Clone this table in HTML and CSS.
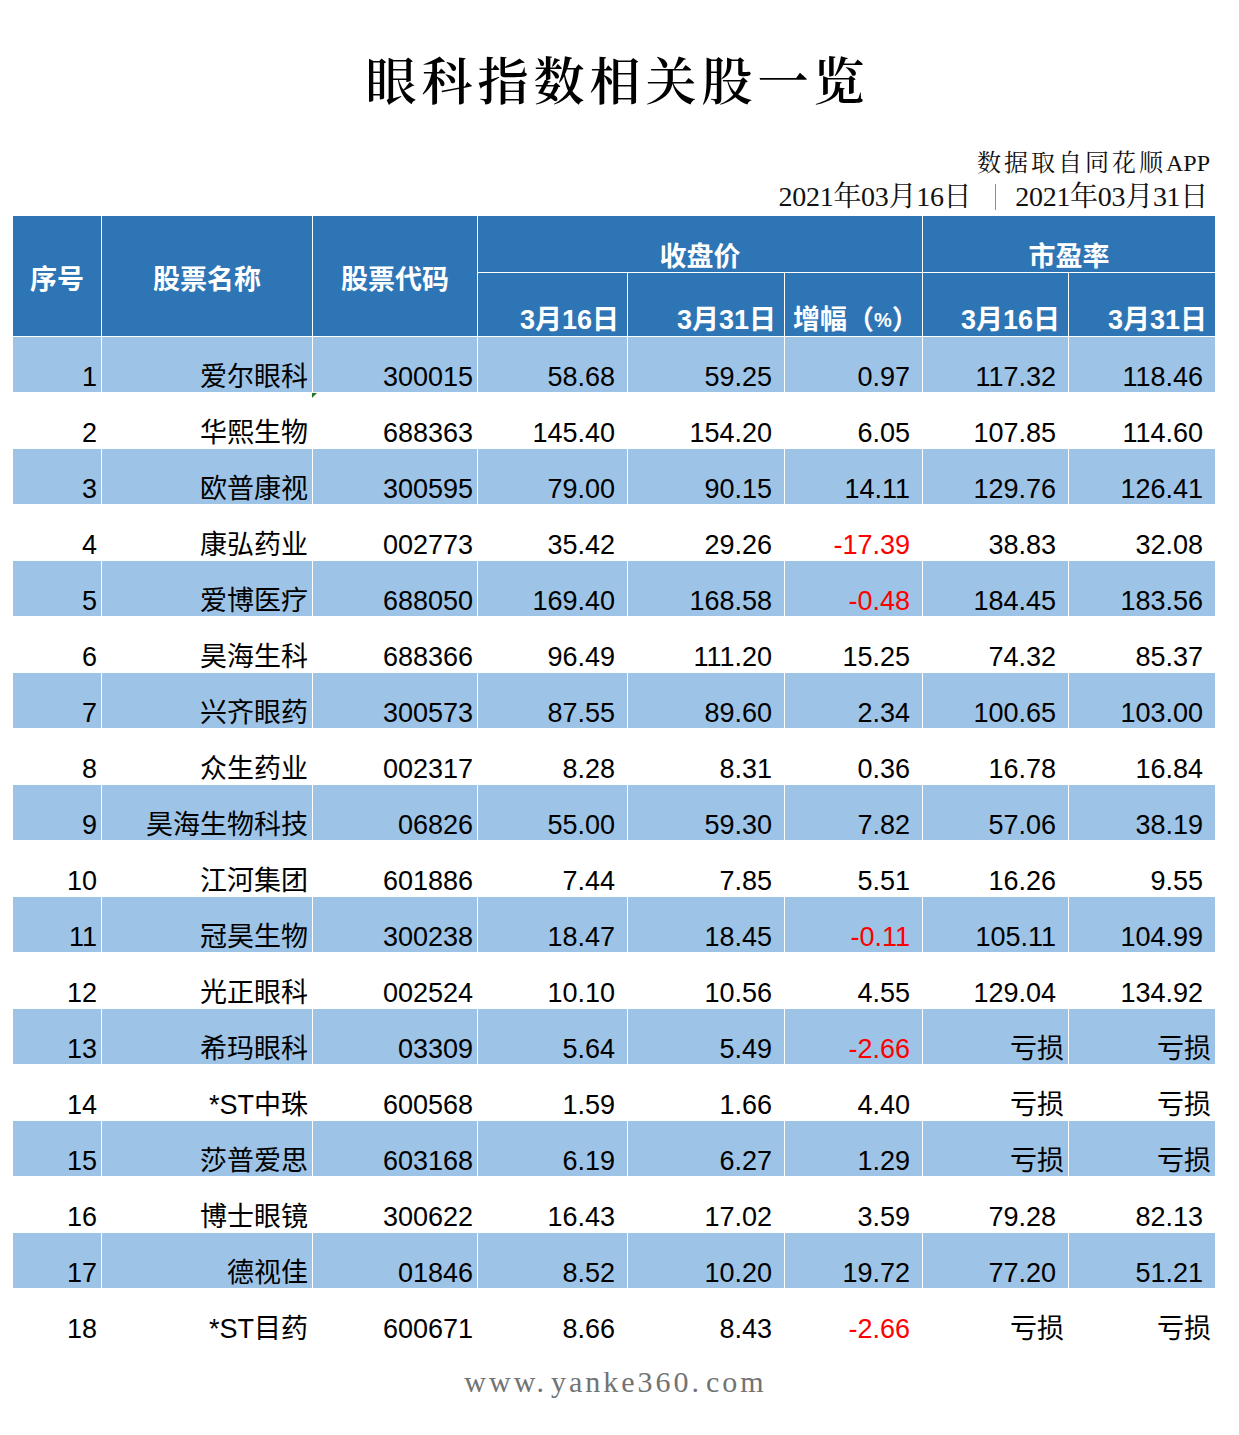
FILE: index.html
```html
<!DOCTYPE html>
<html lang="zh-CN">
<head>
<meta charset="utf-8">
<title>眼科指数相关股一览</title>
<link rel="stylesheet" href="styles.css">
</head>
<body>
<div class="page">
  <h1 class="title">眼科指数相关股一览</h1>
  <div class="meta">
    <div class="source"><span class="cjk">数据取自同花顺</span>APP</div>
    <div class="dates">2021年03月16日<span class="sep"></span>2021年03月31日</div>
  </div>

  <div class="head">
    <div class="h h-idx">序号</div>
    <div class="h h-name">股票名称</div>
    <div class="h h-code">股票代码</div>
    <div class="h h-close">收盘价</div>
    <div class="h h-pe">市盈率</div>
    <div class="h sub">3月16日</div>
    <div class="h sub">3月31日</div>
    <div class="h sub sub-left">增幅<span class="paren">（</span><span class="pct">%</span><span class="paren">）</span></div>
    <div class="h sub">3月16日</div>
    <div class="h sub">3月31日</div>
  </div>

  <div class="rows">
    <div class="row odd"><div class="c">1</div><div class="c">爱尔眼科</div><div class="c">300015</div><div class="c n">58.68</div><div class="c n">59.25</div><div class="c n">0.97</div><div class="c n">117.32</div><div class="c n">118.46</div></div>
    <div class="row"><div class="c">2</div><div class="c">华熙生物</div><div class="c flag">688363</div><div class="c n">145.40</div><div class="c n">154.20</div><div class="c n">6.05</div><div class="c n">107.85</div><div class="c n">114.60</div></div>
    <div class="row odd"><div class="c">3</div><div class="c">欧普康视</div><div class="c">300595</div><div class="c n">79.00</div><div class="c n">90.15</div><div class="c n">14.11</div><div class="c n">129.76</div><div class="c n">126.41</div></div>
    <div class="row"><div class="c">4</div><div class="c">康弘药业</div><div class="c">002773</div><div class="c n">35.42</div><div class="c n">29.26</div><div class="c n neg">-17.39</div><div class="c n">38.83</div><div class="c n">32.08</div></div>
    <div class="row odd"><div class="c">5</div><div class="c">爱博医疗</div><div class="c">688050</div><div class="c n">169.40</div><div class="c n">168.58</div><div class="c n neg">-0.48</div><div class="c n">184.45</div><div class="c n">183.56</div></div>
    <div class="row"><div class="c">6</div><div class="c">昊海生科</div><div class="c">688366</div><div class="c n">96.49</div><div class="c n">111.20</div><div class="c n">15.25</div><div class="c n">74.32</div><div class="c n">85.37</div></div>
    <div class="row odd"><div class="c">7</div><div class="c">兴齐眼药</div><div class="c">300573</div><div class="c n">87.55</div><div class="c n">89.60</div><div class="c n">2.34</div><div class="c n">100.65</div><div class="c n">103.00</div></div>
    <div class="row"><div class="c">8</div><div class="c">众生药业</div><div class="c">002317</div><div class="c n">8.28</div><div class="c n">8.31</div><div class="c n">0.36</div><div class="c n">16.78</div><div class="c n">16.84</div></div>
    <div class="row odd"><div class="c">9</div><div class="c">昊海生物科技</div><div class="c">06826</div><div class="c n">55.00</div><div class="c n">59.30</div><div class="c n">7.82</div><div class="c n">57.06</div><div class="c n">38.19</div></div>
    <div class="row"><div class="c">10</div><div class="c">江河集团</div><div class="c">601886</div><div class="c n">7.44</div><div class="c n">7.85</div><div class="c n">5.51</div><div class="c n">16.26</div><div class="c n">9.55</div></div>
    <div class="row odd"><div class="c">11</div><div class="c">冠昊生物</div><div class="c">300238</div><div class="c n">18.47</div><div class="c n">18.45</div><div class="c n neg">-0.11</div><div class="c n">105.11</div><div class="c n">104.99</div></div>
    <div class="row"><div class="c">12</div><div class="c">光正眼科</div><div class="c">002524</div><div class="c n">10.10</div><div class="c n">10.56</div><div class="c n">4.55</div><div class="c n">129.04</div><div class="c n">134.92</div></div>
    <div class="row odd"><div class="c">13</div><div class="c">希玛眼科</div><div class="c">03309</div><div class="c n">5.64</div><div class="c n">5.49</div><div class="c n neg">-2.66</div><div class="c">亏损</div><div class="c">亏损</div></div>
    <div class="row"><div class="c">14</div><div class="c">*ST中珠</div><div class="c">600568</div><div class="c n">1.59</div><div class="c n">1.66</div><div class="c n">4.40</div><div class="c">亏损</div><div class="c">亏损</div></div>
    <div class="row odd"><div class="c">15</div><div class="c">莎普爱思</div><div class="c">603168</div><div class="c n">6.19</div><div class="c n">6.27</div><div class="c n">1.29</div><div class="c">亏损</div><div class="c">亏损</div></div>
    <div class="row"><div class="c">16</div><div class="c">博士眼镜</div><div class="c">300622</div><div class="c n">16.43</div><div class="c n">17.02</div><div class="c n">3.59</div><div class="c n">79.28</div><div class="c n">82.13</div></div>
    <div class="row odd"><div class="c">17</div><div class="c">德视佳</div><div class="c">01846</div><div class="c n">8.52</div><div class="c n">10.20</div><div class="c n">19.72</div><div class="c n">77.20</div><div class="c n">51.21</div></div>
    <div class="row"><div class="c">18</div><div class="c">*ST目药</div><div class="c">600671</div><div class="c n">8.66</div><div class="c n">8.43</div><div class="c n neg">-2.66</div><div class="c">亏损</div><div class="c">亏损</div></div>
  </div>

  <div class="footer">www<span class="dot">.</span>yanke360<span class="dot">.</span>com</div>
</div>
</body>
</html>
```

FILE: styles.css
```css
html, body {
  margin: 0;
  padding: 0;
  background: #ffffff;
}

.page {
  width: 1239px;
  padding: 0 0 40px 0;
  font-family: "Liberation Sans", "Noto Sans CJK SC", sans-serif;
  color: #000;
}

.title {
  margin: 48px 0 0 0;
  height: 60px;
  line-height: 60px;
  text-align: center;
  font-family: "Noto Serif CJK SC", "Liberation Serif", "Noto Sans CJK SC", serif;
  font-size: 51px;
  font-weight: 600;
  letter-spacing: 5px;
  color: #000;
  padding-right: 4px;
}

.meta {
  margin-top: 38px;
  padding-right: 29px;
  text-align: right;
  font-family: "Liberation Serif", "Noto Serif CJK SC", "Noto Sans CJK SC", serif;
  color: #111;
}

.source {
  height: 34px;
  line-height: 34px;
  font-size: 24px;
}

.source .cjk {
  letter-spacing: 3px;
  font-weight: 400;
}

.dates {
  height: 36px;
  line-height: 34px;
  font-size: 28px;
  letter-spacing: -0.3px;
  padding-right: 2px;
}

.sep {
  display: inline-block;
  width: 1px;
  height: 26px;
  margin: 0 19px 0 24px;
  background: #d07a3c;
  vertical-align: -4px;
}

/* header */
.head {
  margin-left: 13px;
  width: 1202px;
  display: grid;
  grid-template-columns: 88px 210px 164px 149px 156px 137px 145px 146px;
  grid-template-rows: 56px 63px;
  gap: 1px;
  background: #ffffff;
}

.h {
  background: #2e75b6;
  color: #ffffff;
  font-weight: 700;
  font-size: 27px;
  line-height: 27px;
  display: flex;
}

.h-idx, .h-name, .h-code {
  grid-row: 1 / 3;
  align-items: center;
  justify-content: center;
  padding-top: 8px;
}
.h-idx { grid-column: 1; }
.h-name { grid-column: 2; }
.h-code { grid-column: 3; }

.h-close, .h-pe {
  align-items: flex-end;
  justify-content: center;
  padding-bottom: 1px;
}
.h-close { grid-column: 4 / 7; grid-row: 1; }
.h-pe { grid-column: 7 / 9; grid-row: 1; }

.sub {
  grid-row: 2;
  align-items: flex-end;
  justify-content: flex-end;
  padding: 0 8px 2px 0;
}

.sub-left {
  justify-content: flex-start;
  padding-left: 8px;
  padding-right: 0;
}

.pct {
  font-size: 20px;
  font-family: "Liberation Sans", sans-serif;
}

/* body rows */
.rows {
  margin-left: 13px;
  width: 1202px;
}

.row {
  margin-top: 1px;
  height: 55px;
  display: grid;
  grid-template-columns: 88px 210px 164px 149px 156px 137px 145px 146px;
  column-gap: 1px;
  background: #ffffff;
}

.c {
  position: relative;
  display: flex;
  align-items: flex-end;
  justify-content: flex-end;
  padding-right: 4px;
  font-size: 27px;
  line-height: 30px;
  white-space: nowrap;
  background: #ffffff;
}

.row.odd .c {
  background: #9dc3e6;
}

.c.n {
  padding-right: 12px;
}

.c.neg {
  color: #ff0000;
}

.c.flag::before {
  content: "";
  position: absolute;
  left: -1px;
  top: 0;
  width: 0;
  height: 0;
  border-top: 5px solid #1e7a1e;
  border-right: 5px solid transparent;
}

.footer {
  margin-top: 18px;
  height: 40px;
  line-height: 40px;
  text-align: center;
  font-family: "Liberation Serif", serif;
  font-size: 30px;
  letter-spacing: 3px;
  color: #737373;
  padding-right: 8px;
}

.dot {
  margin-right: 4px;
}
```
